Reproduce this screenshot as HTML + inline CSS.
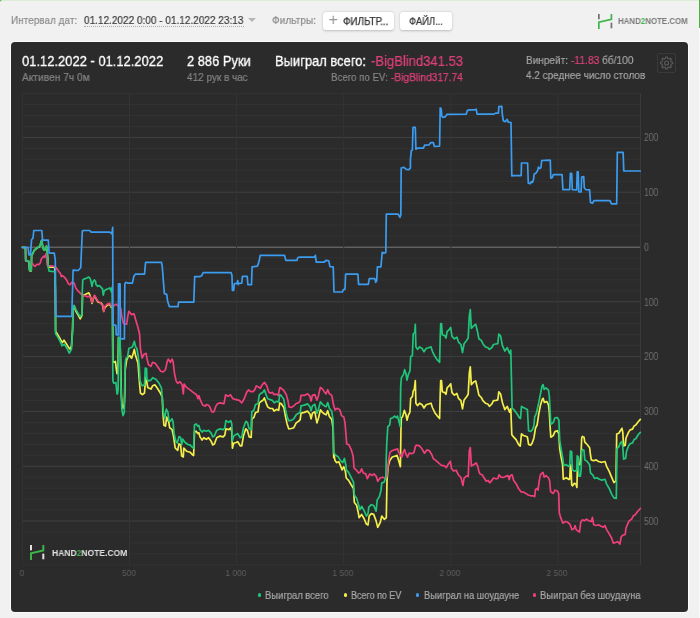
<!DOCTYPE html>
<html><head><meta charset="utf-8"><title>Hand2Note</title>
<style>
html,body{margin:0;padding:0}
body{width:700px;height:618px;overflow:hidden;background:#f1f1f1;font-family:"Liberation Sans",sans-serif;position:relative}
.abs{position:absolute;white-space:nowrap}
.tx{position:absolute;white-space:nowrap;line-height:13px;transform-origin:0 0;will-change:transform;-webkit-text-stroke:0.2px currentColor}
.panel{position:absolute;left:11.2px;top:41.9px;width:676.5px;height:570.6px;background:#2b2b2b;border-radius:4px;box-shadow:0 0 0 1px rgba(255,255,255,.75)}
.yl{position:absolute;left:643.6px;will-change:transform;font-size:10px;line-height:12px;color:#707070;white-space:nowrap;transform:scaleX(.86);transform-origin:0 0}
.xl{position:absolute;top:567px;will-change:transform;width:60px;text-align:center;font-size:9.5px;line-height:12px;color:#5e5e5e;white-space:nowrap;transform:scaleX(.88)}
.btn{position:absolute;top:12px;height:18px;background:#fff;border-radius:3px;box-shadow:0 0.5px 2.5px rgba(0,0,0,.22)}
.dot{position:absolute;top:593.4px;width:3.4px;height:3.4px;border-radius:50%}
</style></head><body>
<div class="abs" style="left:0;top:0;width:700px;height:1px;background:#dcecd6"></div>
<svg class="abs" style="left:0;top:0" width="4" height="4"><path d="M0 0H2.4A2.4 2.4 0 0 0 0 2.4Z" fill="#3fae35"/></svg>
<div class="abs" style="left:698.6px;top:0;width:1.4px;height:28px;background:#4caf3e"></div>
<div class="abs" style="left:699px;top:28px;width:1px;height:590px;background:#fafafa"></div>

<div class="abs" style="left:84px;top:26px;width:160px;height:0;border-bottom:1px dotted #a8a8a8"></div>
<div class="abs" style="left:248px;top:18px;width:0;height:0;border-left:4px solid transparent;border-right:4px solid transparent;border-top:4px solid #b5b5b5"></div>
<div class="btn" style="left:322.5px;width:71px"><span style="position:absolute;left:6px;top:-2px;font-size:16px;line-height:20px;color:#9a9a9a">+</span></div>
<div class="btn" style="left:400px;width:52px"></div>
<svg style="position:absolute;left:596.7px;top:12.9px" width="16.3" height="16.9" viewBox="-1 -1 16.3 16.9">
<path d="M0.85 0 V5.36" stroke="#707070" stroke-width="1.7" fill="none"/>
<path d="M13.45 8.64 V14.30" stroke="#707070" stroke-width="1.7" fill="none"/>
<path d="M0.85 14.90 V8.20 L13.45 5.36 V0" stroke="#3db54a" stroke-width="1.7" fill="none" stroke-linejoin="miter"/>
</svg>

<div class="panel"></div>
<svg width="700" height="618" viewBox="0 0 700 618" style="position:absolute;left:0;top:0">
<rect x="21.9" y="93.06" width="618.6" height="1" fill="#333333"/>
<rect x="21.9" y="104.02" width="618.6" height="1" fill="#333333"/>
<rect x="21.9" y="114.98" width="618.6" height="1" fill="#333333"/>
<rect x="21.9" y="125.94" width="618.6" height="1" fill="#333333"/>
<rect x="21.9" y="136.90" width="618.6" height="1" fill="#414141"/>
<rect x="21.9" y="147.86" width="618.6" height="1" fill="#333333"/>
<rect x="21.9" y="158.82" width="618.6" height="1" fill="#333333"/>
<rect x="21.9" y="169.78" width="618.6" height="1" fill="#333333"/>
<rect x="21.9" y="180.74" width="618.6" height="1" fill="#333333"/>
<rect x="21.9" y="191.70" width="618.6" height="1" fill="#414141"/>
<rect x="21.9" y="202.66" width="618.6" height="1" fill="#333333"/>
<rect x="21.9" y="213.62" width="618.6" height="1" fill="#333333"/>
<rect x="21.9" y="224.58" width="618.6" height="1" fill="#333333"/>
<rect x="21.9" y="235.54" width="618.6" height="1" fill="#333333"/>
<rect x="21.9" y="246.70" width="618.6" height="1" fill="#7a7a7a"/>
<rect x="21.9" y="257.46" width="618.6" height="1" fill="#333333"/>
<rect x="21.9" y="268.42" width="618.6" height="1" fill="#333333"/>
<rect x="21.9" y="279.38" width="618.6" height="1" fill="#333333"/>
<rect x="21.9" y="290.34" width="618.6" height="1" fill="#333333"/>
<rect x="21.9" y="301.30" width="618.6" height="1" fill="#414141"/>
<rect x="21.9" y="312.26" width="618.6" height="1" fill="#333333"/>
<rect x="21.9" y="323.22" width="618.6" height="1" fill="#333333"/>
<rect x="21.9" y="334.18" width="618.6" height="1" fill="#333333"/>
<rect x="21.9" y="345.14" width="618.6" height="1" fill="#333333"/>
<rect x="21.9" y="356.10" width="618.6" height="1" fill="#414141"/>
<rect x="21.9" y="367.06" width="618.6" height="1" fill="#333333"/>
<rect x="21.9" y="378.02" width="618.6" height="1" fill="#333333"/>
<rect x="21.9" y="388.98" width="618.6" height="1" fill="#333333"/>
<rect x="21.9" y="399.94" width="618.6" height="1" fill="#333333"/>
<rect x="21.9" y="410.90" width="618.6" height="1" fill="#414141"/>
<rect x="21.9" y="421.86" width="618.6" height="1" fill="#333333"/>
<rect x="21.9" y="432.82" width="618.6" height="1" fill="#333333"/>
<rect x="21.9" y="443.78" width="618.6" height="1" fill="#333333"/>
<rect x="21.9" y="454.74" width="618.6" height="1" fill="#333333"/>
<rect x="21.9" y="465.70" width="618.6" height="1" fill="#414141"/>
<rect x="21.9" y="476.66" width="618.6" height="1" fill="#333333"/>
<rect x="21.9" y="487.62" width="618.6" height="1" fill="#333333"/>
<rect x="21.9" y="498.58" width="618.6" height="1" fill="#333333"/>
<rect x="21.9" y="509.54" width="618.6" height="1" fill="#333333"/>
<rect x="21.9" y="520.50" width="618.6" height="1" fill="#414141"/>
<rect x="21.9" y="531.46" width="618.6" height="1" fill="#333333"/>
<rect x="21.9" y="542.42" width="618.6" height="1" fill="#333333"/>
<rect x="21.9" y="553.38" width="618.6" height="1" fill="#333333"/>
<rect x="21.9" y="564.34" width="618.6" height="1" fill="#333333"/>
<rect x="21.90" y="93.56" width="1" height="471.28" fill="#343434"/>
<rect x="129.00" y="93.56" width="1" height="471.28" fill="#343434"/>
<rect x="236.10" y="93.56" width="1" height="471.28" fill="#343434"/>
<rect x="343.20" y="93.56" width="1" height="471.28" fill="#343434"/>
<rect x="450.30" y="93.56" width="1" height="471.28" fill="#343434"/>
<rect x="557.40" y="93.56" width="1" height="471.28" fill="#343434"/>
<rect x="640.00" y="93.56" width="1" height="471.28" fill="#3a3a3a"/>
<rect x="23.5" y="541.5" width="105.5" height="22.8" fill="#2b2b2b"/>
<path d="M22.4 247.4 L25.4 247.6 L25.7 260.8 L28.8 261.6 L29.6 270.6 L31.2 270.9 L31.6 255.1 L32.9 253.5 L34.2 250.2 L35.8 249.0 L37.4 247.8 L39.0 247.0 L40.2 245.4 L41.2 241.3 L41.8 240.5 L42.5 245.4 L43.5 249.4 L44.7 250.2 L45.9 247.0 L46.5 246.2 L47.1 251.7 L47.9 259.8 L48.3 266.7 L49.1 267.1 L52.4 267.2 L54.8 267.5 L55.3 290.0 L55.6 331.3 L58.0 335.3 L60.5 339.4 L62.4 342.6 L64.0 340.2 L66.1 343.4 L68.5 347.4 L70.2 349.1 L71.5 345.8 L72.6 328.8 L73.1 307.0 L74.2 306.2 L75.8 311.0 L78.2 315.1 L80.2 318.8 L82.0 315.1 L82.5 298.1 L82.8 295.2 L84.7 294.8 L87.2 293.6 L88.8 292.8 L89.9 295.2 L91.2 299.3 L92.0 303.3 L93.6 297.7 L94.8 296.1 L96.0 298.5 L97.7 301.7 L99.3 302.5 L100.9 302.9 L102.5 304.9 L103.7 311.4 L104.5 308.2 L106.6 305.8 L109.0 304.1 L110.6 305.8 L111.3 307.3 L112.6 306.5 L112.9 361.5 L113.8 362.3 L115.4 361.5 L116.2 368.0 L117.0 373.6 L117.8 372.8 L118.5 337.5 L120.1 343.4 L120.7 364.7 L121.4 396.2 L122.3 407.5 L123.0 408.3 L124.3 404.3 L124.8 392.9 L125.2 369.6 L126.7 359.9 L128.3 356.6 L129.9 355.8 L131.6 358.2 L133.2 353.4 L134.3 349.4 L135.6 355.8 L138.0 363.1 L139.6 384.1 L140.4 393.0 L142.4 394.7 L144.5 393.0 L145.6 377.7 L146.6 380.9 L147.7 387.4 L149.3 388.2 L151.0 389.0 L152.6 385.8 L155.0 384.9 L157.4 388.2 L159.9 392.2 L162.3 397.1 L162.8 410.7 L163.9 425.3 L165.5 426.1 L166.7 417.2 L168.8 422.1 L169.6 427.7 L172.0 429.4 L173.6 436.6 L175.2 448.0 L177.7 450.4 L179.0 443.9 L180.6 444.7 L181.7 456.1 L183.3 456.9 L183.8 448.0 L186.6 451.2 L190.0 452.2 L192.4 454.7 L193.6 455.5 L194.5 432.0 L196.2 431.2 L197.8 433.6 L198.9 432.8 L200.0 436.9 L202.1 440.1 L203.8 437.7 L206.2 439.3 L208.6 437.7 L211.0 440.9 L212.7 444.9 L214.3 444.1 L216.7 437.7 L219.9 436.1 L223.2 436.9 L224.8 435.2 L225.9 428.8 L228.8 429.6 L230.8 428.0 L231.8 432.0 L232.4 448.2 L233.7 443.3 L236.1 442.5 L237.7 441.7 L240.2 445.8 L241.8 445.8 L243.4 436.1 L245.8 428.8 L247.4 430.4 L249.1 436.9 L251.2 437.4 L251.8 419.1 L253.9 417.4 L255.5 412.6 L258.0 411.8 L259.3 402.9 L261.2 401.3 L262.8 400.4 L264.4 398.0 L266.1 402.9 L267.7 406.9 L270.1 408.5 L272.5 408.5 L274.1 411.0 L276.6 409.4 L278.7 410.2 L279.8 402.9 L281.4 403.7 L283.9 407.7 L285.5 416.6 L287.1 423.9 L288.7 428.8 L291.3 428.5 L293.8 427.7 L296.2 422.9 L298.6 421.3 L300.2 419.6 L301.0 413.2 L304.3 412.4 L307.5 411.1 L309.9 414.0 L311.1 418.8 L312.4 413.2 L314.8 411.6 L316.9 422.9 L318.5 418.0 L320.4 409.9 L322.4 412.4 L324.5 414.0 L326.1 414.8 L327.7 410.7 L329.4 416.4 L331.8 419.6 L333.1 428.5 L333.7 457.7 L333.6 451.3 L334.9 460.2 L336.5 462.6 L338.9 461.8 L340.5 465.9 L342.1 469.9 L343.8 466.7 L345.4 471.6 L346.2 478.0 L348.6 480.4 L351.0 484.5 L353.5 488.5 L354.3 502.3 L356.7 505.5 L358.3 512.8 L359.1 517.7 L361.6 514.4 L364.0 518.5 L366.4 524.1 L368.0 525.0 L369.2 516.0 L371.3 513.6 L373.7 514.4 L376.1 520.9 L377.7 527.4 L380.2 522.5 L381.8 516.0 L384.2 519.3 L386.3 517.7 L387.0 480.4 L388.2 465.9 L389.9 460.2 L392.3 457.0 L394.7 456.2 L397.1 455.4 L398.8 461.0 L400.4 466.7 L401.0 426.6 L401.4 417.7 L402.6 416.9 L404.3 410.4 L405.9 414.5 L407.0 420.2 L408.3 415.3 L409.9 412.1 L410.7 398.3 L412.4 396.7 L413.2 391.0 L414.3 389.4 L415.3 380.5 L415.9 403.2 L417.5 405.6 L419.6 403.2 L422.1 404.8 L424.0 408.0 L426.1 404.8 L428.5 404.0 L431.0 403.2 L432.6 408.0 L435.0 412.9 L437.4 416.1 L439.6 418.5 L440.2 394.3 L440.7 380.5 L441.5 380.5 L442.3 391.8 L444.7 392.6 L446.0 394.3 L447.1 387.8 L449.6 385.4 L450.7 383.8 L452.0 392.6 L454.4 395.1 L456.9 393.5 L458.5 398.3 L460.9 400.7 L462.5 408.8 L464.1 399.9 L466.6 396.7 L468.2 394.3 L469.3 373.2 L470.3 366.8 L471.3 384.6 L473.6 382.1 L475.7 381.0 L477.3 387.8 L478.9 395.1 L481.3 397.5 L482.9 400.7 L485.4 403.2 L487.8 404.0 L489.4 406.4 L491.8 404.0 L493.5 400.7 L495.9 400.4 L497.8 399.9 L498.8 391.8 L500.7 394.3 L502.4 402.4 L504.8 409.6 L507.2 406.4 L509.6 412.1 L510.8 408.8 L511.8 434.7 L513.7 437.1 L516.1 439.6 L518.5 444.4 L520.2 446.1 L521.5 433.9 L523.4 435.5 L525.8 436.3 L527.4 437.1 L528.6 444.4 L530.7 445.2 L532.3 442.8 L533.9 438.0 L535.5 428.2 L537.1 425.0 L538.8 413.7 L540.4 405.6 L542.0 399.9 L543.1 398.3 L544.4 402.4 L546.9 401.6 L548.5 404.8 L549.3 412.1 L550.1 426.6 L550.8 437.2 L553.2 435.6 L554.9 431.6 L557.3 430.7 L558.9 434.0 L559.7 448.5 L561.0 456.6 L562.6 464.7 L563.3 479.3 L566.2 477.7 L568.6 479.3 L569.7 479.3 L570.4 464.7 L571.0 465.5 L571.7 484.9 L572.6 485.8 L574.3 483.3 L575.9 484.1 L576.9 487.4 L577.5 464.7 L578.5 463.9 L579.9 464.7 L581.1 453.4 L581.7 438.0 L582.4 436.4 L584.0 437.2 L584.8 442.1 L587.2 444.5 L589.6 447.7 L590.5 455.0 L591.3 459.9 L593.7 460.7 L596.1 459.9 L598.5 461.5 L601.8 462.3 L605.0 461.5 L606.6 466.3 L609.1 471.2 L611.5 476.9 L613.9 482.5 L616.0 480.9 L616.7 434.0 L618.8 433.2 L620.4 430.7 L622.0 428.3 L622.8 432.4 L623.6 446.1 L625.2 445.3 L626.0 438.0 L628.5 432.4 L630.1 429.9 L632.5 429.1 L634.1 425.9 L635.8 425.1 L638.2 421.8 L640.3 419.4" fill="none" stroke="#f3ee4a" stroke-width="1.7" stroke-linejoin="round" stroke-linecap="round"/>
<path d="M22.4 247.2 L25.5 247.5 L25.8 260.6 L28.9 261.4 L30.5 262.2 L32.1 263.0 L33.8 265.4 L35.0 266.3 L36.2 265.1 L37.4 264.2 L39.0 264.6 L40.2 263.0 L41.4 259.0 L42.6 257.4 L43.9 256.1 L44.7 257.4 L45.5 254.9 L46.3 253.3 L46.7 259.0 L47.1 264.6 L47.9 265.9 L50.7 265.9 L54.0 266.3 L55.6 267.1 L57.2 269.1 L58.8 271.5 L60.5 273.5 L61.3 276.6 L62.9 275.8 L64.5 277.4 L66.1 279.1 L68.5 283.9 L70.2 284.7 L71.8 282.3 L74.2 283.1 L75.8 288.0 L78.2 291.2 L80.7 293.6 L83.1 296.1 L85.5 295.7 L87.2 296.9 L89.6 296.1 L91.2 299.3 L92.0 302.5 L93.1 299.3 L94.4 295.2 L96.0 297.7 L97.7 300.9 L100.0 302.4 L103.2 306.5 L104.0 311.3 L104.8 306.5 L107.3 304.1 L109.7 303.2 L111.3 306.5 L113.8 305.7 L116.2 304.1 L118.6 306.5 L120.7 308.1 L121.8 316.2 L123.5 323.5 L126.7 324.3 L127.8 316.2 L128.8 311.3 L131.6 314.6 L134.0 313.8 L135.6 319.4 L138.0 327.5 L139.6 334.0 L140.4 348.5 L142.1 358.2 L144.0 354.2 L146.1 353.4 L146.9 358.2 L148.5 364.7 L151.0 366.3 L152.6 362.3 L155.0 363.1 L157.4 366.3 L160.7 371.2 L163.1 372.0 L165.5 369.6 L167.2 361.5 L168.3 359.1 L170.4 362.3 L172.0 359.1 L173.1 361.5 L174.4 372.8 L176.1 380.9 L177.7 383.3 L180.1 381.7 L182.2 384.9 L183.3 393.9 L184.1 384.1 L186.6 387.4 L190.0 389.9 L193.2 392.4 L196.5 394.8 L198.1 398.8 L198.9 395.6 L200.5 400.4 L202.9 405.3 L205.4 406.1 L206.2 404.5 L208.6 405.3 L210.2 407.7 L211.8 411.8 L213.9 411.8 L215.9 406.1 L217.5 403.7 L219.9 402.9 L222.4 403.4 L224.0 403.7 L225.6 394.8 L228.0 396.4 L230.4 394.8 L232.9 398.8 L236.1 399.6 L239.3 400.4 L241.8 402.9 L244.2 398.8 L246.6 392.4 L248.6 389.9 L250.7 391.6 L253.1 391.6 L254.7 389.9 L256.3 385.9 L258.0 386.7 L260.4 388.3 L262.0 385.1 L264.4 382.3 L266.9 385.9 L268.5 391.6 L270.1 393.2 L272.5 392.4 L274.1 394.8 L276.6 394.0 L278.2 395.6 L279.8 387.5 L281.4 388.3 L283.9 390.7 L286.3 394.8 L287.9 400.4 L289.0 406.9 L291.3 407.5 L293.8 405.9 L296.2 403.5 L298.6 402.6 L300.2 401.0 L301.0 395.4 L304.3 395.4 L307.5 393.8 L309.9 396.2 L311.1 401.0 L312.4 395.4 L314.8 394.6 L316.9 400.2 L318.5 395.4 L320.4 387.3 L322.4 388.9 L324.5 392.1 L326.1 393.8 L327.7 389.7 L329.4 393.8 L331.8 395.4 L333.4 404.3 L335.0 409.9 L337.4 408.3 L339.9 409.9 L341.5 415.6 L343.9 417.2 L345.1 423.7 L346.0 435.0 L346.7 443.9 L348.8 444.7 L351.2 449.6 L353.1 456.1 L354.1 468.2 L356.1 469.8 L358.5 473.0 L360.1 472.2 L361.7 469.0 L363.3 473.0 L365.8 473.9 L367.4 478.7 L369.8 473.9 L372.2 475.5 L373.9 473.9 L376.3 476.3 L377.7 481.3 L380.2 478.0 L382.6 477.2 L385.0 478.0 L386.6 477.2 L386.8 476.6 L387.8 466.9 L388.9 458.8 L390.0 452.4 L392.1 450.7 L393.8 449.9 L396.2 449.4 L397.5 448.8 L398.6 452.4 L400.2 454.8 L401.8 457.2 L403.5 451.6 L404.6 449.4 L405.9 454.0 L407.5 457.2 L409.1 453.2 L411.6 453.7 L414.0 452.4 L415.3 446.7 L416.4 445.1 L419.6 445.9 L422.1 449.1 L424.5 453.2 L426.9 449.9 L429.4 450.7 L431.8 454.8 L433.4 458.8 L435.8 460.4 L439.1 463.4 L441.5 465.3 L443.9 465.6 L446.3 467.7 L448.0 464.5 L450.4 461.3 L451.5 468.5 L453.6 471.0 L456.1 470.2 L458.5 475.0 L460.9 477.4 L462.9 485.5 L464.1 478.2 L466.6 475.8 L468.2 476.6 L469.3 450.7 L470.3 447.5 L471.4 466.1 L473.9 464.5 L476.3 462.9 L477.9 466.9 L479.0 471.8 L480.0 474.0 L482.1 474.8 L484.2 478.0 L486.2 481.3 L488.1 480.4 L489.7 482.9 L491.8 480.4 L493.5 478.0 L495.9 478.8 L497.8 478.5 L499.1 474.8 L501.1 477.2 L503.2 477.5 L505.6 476.4 L508.0 475.6 L509.2 479.6 L510.4 475.6 L512.1 474.8 L513.7 480.4 L516.1 483.7 L518.5 488.5 L521.0 491.8 L523.4 492.1 L525.8 493.4 L528.2 495.0 L530.7 495.8 L533.1 495.8 L534.7 496.6 L535.5 489.4 L537.1 488.5 L538.0 490.2 L539.3 480.4 L540.4 474.8 L542.0 473.2 L543.1 472.4 L544.1 477.2 L546.0 475.6 L548.5 478.0 L549.6 480.4 L550.6 491.8 L553.3 493.4 L555.0 490.2 L557.4 491.0 L558.7 493.4 L559.3 512.8 L560.9 518.5 L561.0 518.2 L562.9 523.1 L565.4 521.5 L567.8 522.3 L570.2 524.7 L571.8 529.6 L574.0 528.8 L575.1 525.5 L576.2 529.6 L578.3 531.2 L579.5 532.0 L580.7 522.3 L582.4 519.9 L584.8 520.7 L586.4 519.1 L588.8 520.7 L591.3 521.5 L592.4 517.4 L593.7 524.7 L596.1 525.5 L598.5 524.7 L601.0 526.3 L603.4 527.1 L605.0 525.5 L606.6 529.6 L609.1 533.6 L611.5 537.7 L613.4 543.3 L615.5 542.5 L617.6 541.7 L619.9 544.1 L621.2 536.9 L622.8 535.2 L625.2 534.4 L626.0 528.0 L627.7 523.9 L629.3 520.7 L631.7 519.1 L633.3 515.8 L635.0 515.0 L637.4 511.8 L640.3 508.5" fill="none" stroke="#ef3f7c" stroke-width="1.7" stroke-linejoin="round" stroke-linecap="round"/>
<path d="M22.4 247.2 L25.5 247.4 L25.8 260.6 L28.9 261.2 L29.7 270.3 L31.3 270.7 L31.7 254.9 L32.9 253.3 L34.2 250.1 L35.8 248.9 L37.4 247.7 L39.0 246.8 L40.2 245.2 L41.2 241.2 L41.8 240.4 L42.5 245.2 L43.5 249.3 L44.7 250.1 L45.9 246.8 L46.5 246.0 L47.1 251.7 L47.9 259.8 L48.3 267.1 L49.1 271.1 L52.4 271.5 L54.8 271.8 L55.3 290.0 L55.6 333.7 L57.2 336.1 L59.6 340.2 L62.1 345.8 L64.5 344.2 L66.9 348.2 L69.3 353.1 L71.5 349.1 L72.6 330.4 L73.1 306.2 L74.2 305.4 L75.8 309.4 L78.2 313.5 L80.2 316.7 L82.0 314.3 L82.3 290.0 L82.8 279.9 L83.9 279.1 L86.3 278.2 L88.8 277.0 L90.4 279.1 L91.2 282.3 L92.0 286.3 L92.8 282.3 L94.4 279.9 L95.6 281.5 L96.0 284.7 L97.7 286.3 L99.3 285.5 L100.9 287.1 L102.5 288.8 L103.3 295.2 L104.1 291.2 L105.8 289.6 L108.2 288.8 L109.8 288.0 L111.4 291.2 L111.3 292.0 L112.1 287.1 L112.9 380.9 L113.8 383.3 L115.9 382.5 L117.0 393.9 L117.5 393.8 L118.1 389.7 L118.5 337.2 L120.1 338.8 L120.7 380.0 L121.8 409.1 L123.0 415.6 L124.3 412.4 L124.8 380.0 L125.1 364.7 L125.9 358.2 L127.5 357.4 L128.8 348.5 L130.7 347.7 L132.4 346.9 L134.3 341.3 L135.6 346.9 L136.9 348.5 L138.0 355.0 L139.2 364.7 L140.1 380.9 L141.3 384.1 L142.4 385.8 L144.5 384.9 L145.3 368.0 L146.6 368.8 L146.9 379.3 L148.5 380.9 L151.0 380.1 L152.6 377.7 L155.8 379.3 L159.1 383.3 L161.5 388.2 L162.3 399.4 L163.4 412.4 L164.7 418.0 L166.3 409.1 L168.0 412.4 L168.8 420.4 L170.4 421.3 L172.0 418.8 L173.1 422.1 L174.1 433.4 L175.7 440.7 L177.3 443.1 L179.0 436.6 L180.6 437.4 L181.7 444.7 L182.8 439.1 L184.9 442.3 L188.2 444.7 L190.0 444.9 L192.4 447.4 L193.6 448.2 L194.5 424.7 L196.2 423.9 L197.8 426.3 L198.9 425.5 L200.0 429.6 L202.1 432.0 L203.8 430.4 L206.2 431.2 L208.6 430.4 L211.0 432.8 L212.7 436.9 L214.3 436.1 L216.7 430.4 L219.9 428.8 L223.2 429.6 L224.8 428.0 L225.9 420.7 L228.8 422.3 L230.8 420.7 L231.8 423.9 L232.4 440.9 L233.7 436.1 L236.1 434.4 L237.7 433.6 L240.2 437.7 L241.8 436.9 L243.4 428.0 L245.8 421.5 L247.4 422.3 L249.1 428.8 L251.2 429.6 L251.8 411.8 L253.9 410.2 L255.5 404.5 L258.0 403.7 L259.3 394.8 L261.2 393.2 L262.8 392.4 L264.4 389.9 L266.1 394.8 L267.7 398.8 L270.1 399.6 L272.5 400.4 L274.1 402.9 L276.6 401.3 L278.7 402.1 L279.8 394.8 L281.4 395.6 L283.9 399.6 L285.5 409.4 L287.1 416.6 L288.7 420.7 L291.3 420.4 L293.8 418.8 L296.2 414.8 L298.6 413.2 L300.2 412.4 L301.0 405.9 L304.3 405.1 L307.5 403.9 L309.9 406.7 L311.1 410.7 L312.4 405.9 L314.8 404.3 L316.9 413.2 L318.5 409.1 L320.4 401.8 L322.4 404.3 L324.5 405.9 L326.1 406.7 L327.7 402.6 L329.4 408.3 L331.8 411.6 L333.1 420.4 L333.7 452.8 L335.8 455.2 L338.2 456.9 L340.7 460.9 L342.8 462.5 L344.4 458.5 L346.0 465.8 L346.2 469.9 L348.6 472.4 L351.0 477.2 L353.5 482.1 L354.3 495.0 L356.7 498.2 L358.3 503.9 L359.9 509.6 L361.6 506.3 L364.0 510.4 L366.4 516.0 L368.0 513.6 L368.8 507.1 L371.3 504.7 L373.7 505.5 L376.1 511.2 L377.2 499.9 L379.4 496.6 L381.0 490.2 L381.8 482.9 L384.2 482.1 L385.8 477.2 L386.3 456.2 L386.5 450.9 L386.8 442.8 L387.8 426.6 L389.7 425.0 L390.5 418.5 L392.9 417.7 L394.6 416.1 L396.2 417.7 L397.5 416.1 L398.6 420.2 L400.2 426.6 L400.7 386.2 L401.4 377.7 L403.5 374.4 L404.6 369.6 L405.9 373.6 L407.0 380.1 L408.3 374.4 L409.9 371.2 L410.7 356.6 L412.4 355.8 L413.2 334.0 L414.8 332.4 L415.3 324.3 L415.9 346.9 L417.5 349.4 L419.6 346.9 L422.1 348.5 L424.0 351.8 L426.1 348.5 L428.5 347.7 L431.0 346.9 L432.6 351.8 L435.0 356.6 L437.4 359.9 L439.6 362.3 L440.2 337.2 L440.7 323.5 L441.5 323.5 L442.3 334.8 L444.7 335.6 L446.0 338.0 L447.1 331.6 L449.6 329.1 L450.7 327.5 L452.0 336.4 L454.4 338.8 L456.9 337.2 L458.5 342.1 L460.9 344.5 L462.5 352.6 L464.1 343.7 L466.6 340.4 L468.2 338.0 L469.3 316.2 L470.3 309.7 L471.3 328.3 L473.6 325.9 L475.7 324.3 L477.3 330.7 L478.9 338.8 L481.3 340.4 L482.9 343.7 L485.4 346.9 L487.8 347.7 L489.4 349.4 L491.8 347.7 L493.5 344.5 L495.9 344.0 L497.8 343.7 L498.8 334.0 L500.7 336.4 L502.4 345.3 L504.8 351.0 L507.2 347.7 L509.6 353.4 L510.8 350.2 L512.1 408.0 L514.5 410.4 L516.9 413.7 L519.4 417.7 L520.5 418.5 L521.5 406.4 L523.4 407.5 L525.8 408.8 L527.4 409.6 L528.6 430.7 L530.7 431.5 L532.3 429.9 L533.9 425.8 L534.7 416.9 L536.3 413.7 L538.8 402.4 L540.4 394.3 L542.0 386.2 L543.1 384.6 L544.1 389.4 L546.0 387.8 L548.5 390.2 L549.3 395.9 L550.1 410.4 L550.8 424.3 L553.2 422.6 L554.9 417.8 L557.3 417.5 L558.9 420.2 L559.7 440.4 L561.0 448.5 L562.6 457.4 L563.8 465.5 L566.2 464.7 L568.6 466.3 L569.7 465.5 L570.4 451.0 L571.7 451.8 L572.3 469.6 L574.3 471.2 L576.7 470.4 L577.2 455.8 L578.2 456.6 L578.8 476.1 L580.4 476.1 L581.1 469.6 L581.7 451.8 L582.4 449.4 L584.0 450.2 L584.8 459.9 L587.2 461.5 L589.6 464.7 L590.5 472.8 L592.9 475.2 L594.5 478.5 L596.9 477.7 L599.4 479.3 L601.8 480.1 L605.0 479.3 L606.6 484.1 L609.1 488.2 L611.5 493.9 L613.9 497.9 L616.3 498.4 L617.0 448.5 L618.8 446.9 L620.4 442.9 L622.0 441.3 L622.8 446.9 L623.6 459.1 L625.7 458.2 L626.4 451.8 L628.5 446.1 L630.1 443.7 L632.5 442.9 L634.1 439.6 L635.8 438.8 L638.2 434.8 L640.3 432.4" fill="none" stroke="#1fc57a" stroke-width="1.7" stroke-linejoin="round" stroke-linecap="round"/>
<path d="M22.4 247.5 L28.1 247.5 L28.9 254.8 L30.5 254.8 L31.6 239.4 L32.9 238.6 L33.8 230.5 L41.8 230.5 L42.6 240.2 L48.3 240.2 L49.1 253.2 L54.3 253.2 L55.3 260.4 L55.9 315.5 L57.2 316.3 L71.8 316.3 L73.1 270.2 L78.2 270.5 L80.7 267.7 L82.3 231.3 L83.4 230.5 L89.6 230.5 L91.2 232.1 L109.8 232.1 L111.9 233.8 L112.7 227.3 L112.9 324.3 L115.9 325.6 L116.2 334.8 L118.3 334.8 L118.5 283.9 L120.1 283.9 L120.4 338.8 L124.4 338.8 L124.8 283.9 L125.9 282.3 L127.5 283.1 L132.4 283.1 L134.0 275.8 L135.6 274.2 L144.5 274.2 L145.6 262.4 L161.5 262.4 L162.3 266.9 L163.4 281.5 L164.4 293.6 L166.7 294.4 L167.6 300.9 L169.3 306.6 L178.0 306.6 L178.6 302.2 L193.8 302.2 L194.7 276.6 L200.0 276.6 L201.6 275.8 L203.2 272.6 L231.1 272.6 L232.0 275.8 L232.4 290.4 L233.7 290.4 L234.3 283.9 L237.2 283.1 L237.7 280.7 L238.2 284.7 L238.8 283.4 L241.8 283.1 L242.4 276.3 L247.2 276.3 L247.9 284.7 L251.5 284.7 L252.1 266.9 L257.4 266.1 L258.6 262.9 L259.6 258.8 L260.2 255.3 L284.5 255.3 L285.8 260.4 L296.8 260.4 L297.9 257.5 L300.0 257.2 L314.6 257.2 L315.4 255.3 L316.2 262.1 L324.3 262.1 L325.9 260.4 L328.8 260.8 L329.9 266.6 L333.2 266.9 L334.0 292.0 L342.4 292.0 L343.4 289.6 L345.0 289.3 L345.6 274.2 L357.9 274.2 L358.6 284.4 L368.3 284.4 L369.3 278.6 L374.8 278.6 L375.7 282.3 L376.7 280.7 L377.4 266.9 L380.9 266.9 L382.2 252.4 L384.1 253.2 L385.8 252.4 L386.3 214.2 L398.2 214.2 L399.9 217.4 L400.8 215.0 L401.2 168.1 L403.9 167.3 L406.3 169.4 L408.8 169.7 L410.4 168.1 L410.4 159.7 L411.3 150.8 L412.4 150.0 L413.0 127.4 L415.3 127.4 L415.9 149.2 L417.7 148.1 L423.4 148.1 L424.7 145.2 L429.1 144.8 L430.7 142.7 L433.4 142.7 L434.4 146.5 L439.6 146.1 L440.2 107.9 L441.2 108.8 L441.8 116.0 L442.8 117.3 L445.2 116.8 L446.9 114.4 L466.3 114.1 L467.4 110.4 L470.0 109.9 L474.6 109.9 L476.2 109.2 L477.1 114.1 L494.0 114.1 L495.6 113.1 L498.5 113.1 L498.8 106.7 L501.8 106.3 L502.4 115.2 L503.4 120.9 L505.3 121.7 L507.2 119.3 L508.2 122.2 L511.0 122.5 L511.8 175.9 L513.4 175.6 L521.2 175.6 L521.5 163.0 L527.6 163.0 L528.3 183.2 L530.4 183.7 L531.2 181.6 L532.5 182.4 L533.6 179.1 L534.1 174.3 L536.0 173.0 L537.4 171.1 L538.5 167.0 L539.6 168.6 L540.9 167.8 L541.7 160.5 L549.3 160.1 L550.3 160.4 L550.8 178.2 L552.4 177.4 L553.2 174.7 L562.1 174.7 L562.9 189.6 L569.7 189.6 L570.4 173.4 L571.7 173.4 L572.3 189.6 L576.7 189.9 L577.2 171.8 L578.2 171.8 L578.8 192.0 L581.1 192.0 L581.7 177.0 L583.7 176.6 L584.3 188.0 L585.9 189.6 L589.6 189.9 L590.5 202.5 L592.4 203.3 L594.0 200.6 L609.9 200.6 L611.5 203.8 L616.7 203.8 L617.3 152.4 L623.1 152.4 L623.8 171.0 L640.3 171.0" fill="none" stroke="#3b9cf0" stroke-width="1.7" stroke-linejoin="round" stroke-linecap="round"/>
</svg>
<div class="abs" style="left:656.9px;top:53.0px;width:19.4px;height:19.8px;border:1.3px solid #3a3a3a;border-radius:2px;box-sizing:border-box"></div>
<svg class="abs" style="left:0;top:0" width="700" height="100"><path d="M671.17 61.90 L672.65 62.19 L672.65 63.81 L671.17 64.10 L670.61 65.46 L671.45 66.70 L670.30 67.85 L669.06 67.01 L667.70 67.57 L667.41 69.05 L665.79 69.05 L665.50 67.57 L664.14 67.01 L662.90 67.85 L661.75 66.70 L662.59 65.46 L662.03 64.10 L660.55 63.81 L660.55 62.19 L662.03 61.90 L662.59 60.54 L661.75 59.30 L662.90 58.15 L664.14 58.99 L665.50 58.43 L665.79 56.95 L667.41 56.95 L667.70 58.43 L669.06 58.99 L670.30 58.15 L671.45 59.30 L670.61 60.54Z" fill="none" stroke="#5c5c5c" stroke-width="1.1" stroke-linejoin="round"/><circle cx="666.6" cy="63.0" r="2.0" fill="none" stroke="#5c5c5c" stroke-width="1.1"/></svg>
<svg style="position:absolute;left:28.5px;top:543.8px" width="16.3" height="16.9" viewBox="-1 -1 16.3 16.9">
<path d="M1.00 0 V5.36" stroke="#e2e2e2" stroke-width="2.0" fill="none"/>
<path d="M13.30 8.64 V14.30" stroke="#e2e2e2" stroke-width="2.0" fill="none"/>
<path d="M1.00 14.90 V8.20 L13.30 5.36 V0" stroke="#3db54a" stroke-width="2.0" fill="none" stroke-linejoin="miter"/>
</svg>
<div class="tx" id="t_int" style="left:11.1px;top:14px;font-size:11.5px;color:#8a8a8a;transform:scaleX(0.8693);">Интервал дат:</div>
<div class="tx" id="t_date" style="left:84px;top:14px;font-size:11.5px;color:#3a3a3a;transform:scaleX(0.8716);">01.12.2022 0:00 - 01.12.2022 23:13</div>
<div class="tx" id="t_fil" style="left:272.3px;top:14px;font-size:11.5px;color:#8a8a8a;transform:scaleX(0.8764);">Фильтры:</div>
<div class="tx" id="t_b1" style="left:343.3px;top:14.5px;font-size:10.5px;color:#333;transform:scaleX(0.9370);-webkit-text-stroke:0.25px currentColor">ФИЛЬТР...</div>
<div class="tx" id="t_b2" style="left:409px;top:14.5px;font-size:10.5px;color:#333;transform:scaleX(0.8958);-webkit-text-stroke:0.2px currentColor">ФАЙЛ...</div>
<div class="tx" id="t_logo" style="left:618px;top:16.1px;font-size:8.4px;color:#7a7a7a;transform:scaleX(0.9417);font-weight:bold;line-height:10px;-webkit-text-stroke:0">HAND<span style="color:#3db54a">2</span>NOTE.COM</div>
<div class="tx" id="t_title" style="left:22.3px;top:52px;font-size:15px;color:#fff;transform:scaleX(0.8637);line-height:18px;-webkit-text-stroke:0.3px currentColor">01.12.2022 - 01.12.2022</div>
<div class="tx" id="t_act" style="left:22.3px;top:71px;font-size:11.5px;color:#858585;transform:scaleX(0.8870);">Активен 7ч 0м</div>
<div class="tx" id="t_hands" style="left:187.3px;top:52px;font-size:15px;color:#fff;transform:scaleX(0.8590);line-height:18px;-webkit-text-stroke:0.3px currentColor">2 886 Руки</div>
<div class="tx" id="t_hph" style="left:187.3px;top:71px;font-size:11.5px;color:#858585;transform:scaleX(0.8662);">412 рук в час</div>
<div class="tx" id="t_won" style="left:274.9px;top:52px;font-size:15px;color:#fff;transform:scaleX(0.8622);line-height:18px;-webkit-text-stroke:0.3px currentColor">Выиграл всего:</div>
<div class="tx" id="t_wonv" style="left:370.7px;top:52px;font-size:15px;color:#e0407a;transform:scaleX(0.8695);line-height:18px">-BigBlind341.53</div>
<div class="tx" id="t_ev" style="left:330.6px;top:71px;font-size:11.5px;color:#858585;transform:scaleX(0.8442);">Всего по EV:</div>
<div class="tx" id="t_evv" style="left:391px;top:71px;font-size:11.5px;color:#e0407a;transform:scaleX(0.8842);-webkit-text-stroke:0.25px currentColor">-BigBlind317.74</div>
<div class="tx" id="t_wr" style="left:525.7px;top:54.4px;font-size:11.5px;color:#a5a5a5;transform:scaleX(0.8727);">Винрейт:</div>
<div class="tx" id="t_wrv" style="left:570.6px;top:54.4px;font-size:11.5px;color:#e0407a;transform:scaleX(0.8940);">-11.83</div>
<div class="tx" id="t_bb" style="left:602px;top:54.4px;font-size:11.5px;color:#a5a5a5;transform:scaleX(0.8830);">бб/100</div>
<div class="tx" id="t_tbl" style="left:525.7px;top:69px;font-size:11.5px;color:#a5a5a5;transform:scaleX(0.8669);">4.2 среднее число столов</div>
<div class="tx" id="t_wm" style="left:51.5px;top:547.5px;font-size:9px;color:#e0e0e0;transform:scaleX(0.9470);font-weight:bold;line-height:10px;-webkit-text-stroke:0">HAND<span style="color:#3db54a">2</span>NOTE.COM</div>
<div class="tx" id="t_l1" style="left:265px;top:589px;font-size:11px;color:#a9a9a9;transform:scaleX(0.8555);">Выиграл всего</div>
<div class="tx" id="t_l2" style="left:350.6px;top:589px;font-size:11px;color:#a9a9a9;transform:scaleX(0.8168);">Всего по EV</div>
<div class="tx" id="t_l3" style="left:423.6px;top:589px;font-size:11px;color:#a9a9a9;transform:scaleX(0.8468);">Выиграл на шоудауне</div>
<div class="tx" id="t_l4" style="left:540.2px;top:589px;font-size:11px;color:#a9a9a9;transform:scaleX(0.8574);">Выиграл без шоудауна</div>
<div class="yl" style="top:132.1px">200</div><div class="yl" style="top:186.9px">100</div><div class="yl" style="top:241.7px">0</div><div class="yl" style="top:296.5px">100</div><div class="yl" style="top:351.3px">200</div><div class="yl" style="top:406.1px">300</div><div class="yl" style="top:460.9px">400</div><div class="yl" style="top:515.7px">500</div>
<div class="xl" style="left:-8.1px">0</div><div class="xl" style="left:99.0px">500</div><div class="xl" style="left:206.1px">1 000</div><div class="xl" style="left:313.2px">1 500</div><div class="xl" style="left:420.3px">2 000</div><div class="xl" style="left:527.4px">2 500</div>
<div class="dot" style="left:257.8px;background:#1fc57a"></div>
<div class="dot" style="left:343.8px;background:#f3ee4a"></div>
<div class="dot" style="left:415.9px;background:#3b9cf0"></div>
<div class="dot" style="left:532.8px;background:#ef3f7c"></div>
</body></html>
